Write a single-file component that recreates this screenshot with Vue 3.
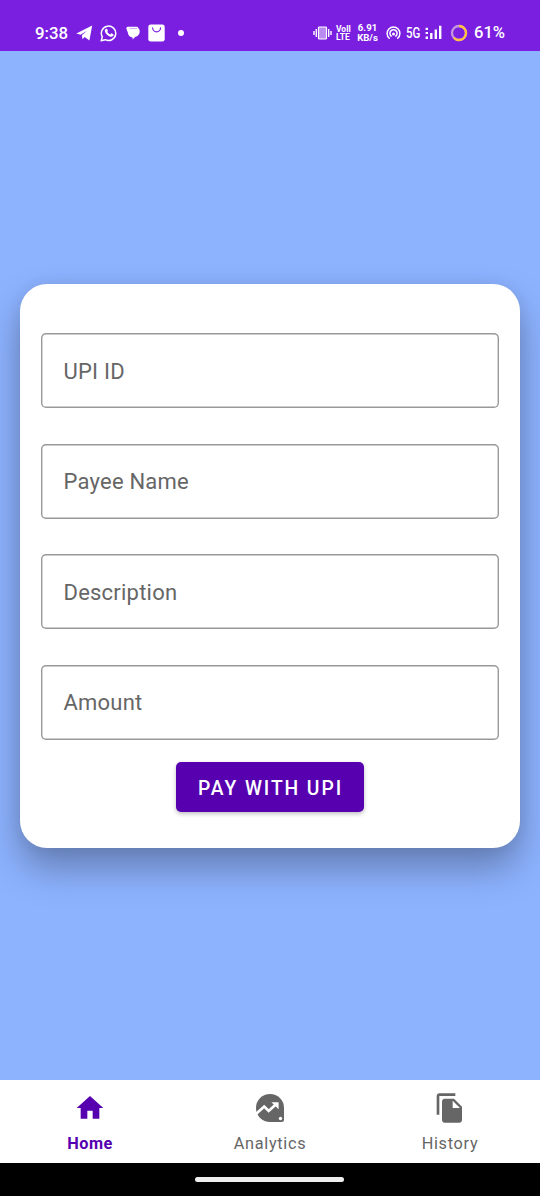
<script setup>
const fields = ['UPI ID', 'Payee Name', 'Description', 'Amount']
</script>

<template>
  <div class="screen">
    <header class="status">
      <span class="clock">9:38</span>
      <svg class="telegram" width="17" height="16" viewBox="0 0 17 16"><path fill="#fff" d="M.3 8.4 16.2.6 13.4 15.4 8.7 12 6.5 14.2 5.9 10.2 11 5.8 4.6 9.7Z" /></svg>
      <svg class="whatsapp" width="18" height="18" viewBox="0 0 18 18">
        <path d="M1.2 16.8 2.3 12.9A7.2 7.2 0 1 1 5.2 15.7Z" fill="none" stroke="#fff" stroke-width="1.5" stroke-linejoin="round" />
        <path d="M6.1 4.8c.6-.3 1-.1 1.2.4l.6 1.4c.1.4-.4.9-.6 1.2.7 1.3 1.6 2.1 2.9 2.6l.9-1c.3-.2.5-.1.8 0l1.4.8c.4.2.3 1 0 1.5-.8 1.2-2.3 1.2-3.6.7-2.4-.9-4.4-3.1-4.9-5.1-.2-1 .4-2.1 1.3-2.5Z" fill="#fff" />
      </svg>
      <svg class="chat" width="14" height="14" viewBox="0 0 14 14"><path fill="#fff" d="M2.3.7h8.2c1.1 0 1.7.6 1.8 1.5 1 .7 1.4 1.8 1.4 3.2 0 2.8-1.9 4.9-4.3 5.3L6.6 13.5V11.4C3.9 11.3 2.2 9.6 1.9 6.8L.5 3.1C-.1 1.8.8.7 2.3.7Z" /><path d="M3.4 2.4H11" stroke="#b686ed" stroke-width=".7" /></svg>
      <svg class="bag" width="17" height="18" viewBox="0 0 17 18"><rect x=".3" y=".4" width="16.4" height="17.2" rx="2.4" fill="#fff" /><path d="M4.6 3.8a4 4 0 0 0 8 0" fill="none" stroke="#7c20df" stroke-width="1.2" stroke-linecap="round" /></svg>
      <i class="dot"></i>
      <svg class="vibrate" width="19" height="14" viewBox="0 0 19 14">
        <rect x="5.5" y="1" width="8" height="12" rx=".8" fill="#b98af0" stroke="#fff" stroke-width="1.2" />
        <path d="M3.3 3v8M15.7 3v8M1 5v4M18 5v4" stroke="#fff" stroke-width="1.4" />
      </svg>
      <span class="stack volte"><span>Voll</span><span>LTE</span></span>
      <span class="stack speed"><span>6.91</span><span>KB/s</span></span>
      <svg class="hotspot" width="15" height="14" viewBox="0 0 15 14">
        <g fill="none" stroke="#fff" stroke-width="1.5" stroke-linecap="round"><path d="M3.3 12.2a6.4 6.4 0 1 1 8.4 0" /><path d="M5.2 10.1a3.6 3.6 0 1 1 4.6 0" /></g><circle cx="7.5" cy="8" r="1.5" fill="#fff" />
      </svg>
      <span class="network"><span>5G</span></span>
      <svg class="signal" width="17" height="15" viewBox="0 0 17 15"><path d="M1.8 11.5V14M6.3 8v6M10.8 4.5V14M15.2.7V14" stroke="#fff" stroke-width="2.4" /><path d="M1.8 2.7v2.2M1.8 6.9V9.1" stroke="#fff" stroke-width="2.4" /></svg>
      <svg class="ring" width="18" height="18" viewBox="0 0 18 18"><g fill="none" stroke-width="2.3"><circle cx="9" cy="9" r="7" stroke="#c795df" /><path d="M9 2a7 7 0 1 1-5.2 11.7" stroke="#ffc044" /></g></svg>
      <span class="battery">61%</span>
    </header>

    <main>
      <form class="card" @submit.prevent>
        <div v-for="field in fields" :key="field" class="field">{{ field }}</div>
        <button type="button">PAY WITH UPI</button>
      </form>
    </main>

    <nav>
      <a class="active">
        <svg width="32" height="32" viewBox="0 0 24 24"><path fill="currentColor" d="M10 20v-6h4v6h5v-8h3L12 3 2 12h3v8z" /></svg>
        <span>Home</span>
      </a>
      <a>
        <svg width="32" height="32" viewBox="0 0 32 32">
          <path fill="currentColor" d="M16 2a14 14 0 0 1 14 14v11.5q0 2.5-2.5 2.5H16A14 14 0 0 1 16 2Z" />
          <path d="M2.5 21.5 10.2 14.5 14.7 19 22.3 12.1" fill="none" stroke="#fff" stroke-width="2.7" />
          <path d="M17.4 10.2H24.6V17.3Z" fill="#fff" /><circle cx="26.5" cy="26.5" r="1.7" fill="#fff" />
        </svg>
        <span>Analytics</span>
      </a>
      <a>
        <svg width="32" height="32" viewBox="0 0 24 24"><path fill="currentColor" d="M16 1H4c-1.1 0-2 .9-2 2v14h2V3h12V1zm-1 4 6 6v10c0 1.1-.9 2-2 2H7.99C6.89 23 6 22.1 6 21l.01-14c0-1.1.89-2 1.99-2h7zm-1 7h5.5L14 6.5V12z" /></svg>
        <span>History</span>
      </a>
    </nav>
    <footer><i></i></footer>
  </div>
</template>

<style>
body { margin: 0; }
</style>

<style scoped>
.screen { display: flex; flex-direction: column; width: 540px; height: 1196px; overflow: hidden; background: #8db3ff; font-family: Roboto, sans-serif; }
.status { box-sizing: border-box; display: flex; align-items: center; flex: none; height: 51.4px; padding: 14px 0 0 35px; background: #7a1ee0; color: #fff; }
.status > * { flex: none; }
.clock { width: 34px; font-size: 16.8px; font-weight: 500; line-height: 20px; white-space: nowrap; }
.telegram { margin-left: 6.5px; }
.whatsapp { margin-left: 7px; }
.chat { margin-left: 8px; }
.bag { margin-left: 8.5px; }
.dot { width: 6px; height: 6px; margin-left: 13px; border-radius: 50%; background: #fff; }
.vibrate { margin-left: 128.5px; }
.stack { display: flex; flex-direction: column; font-weight: 700; white-space: nowrap; }
.volte { width: 15px; margin-left: 4.5px; font-size: 8.5px; line-height: 8px; }
.speed { align-items: center; width: 22px; margin-left: 5.5px; font-size: 9.6px; line-height: 10px; }
.hotspot { margin-left: 7px; }
.network { width: 15px; margin-left: 5px; font-size: 14px; font-weight: 500; }
.network span { display: inline-block; transform: scaleX(.82); transform-origin: left; }
.signal { margin-left: 4px; }
.ring { margin-left: 8.5px; }
.battery { margin-left: 6px; font-size: 16.6px; font-weight: 500; line-height: 20px; }
main { flex: 1; display: flex; justify-content: center; padding-top: 233px; }
.card { box-sizing: border-box; display: flex; flex-direction: column; align-items: center; width: 499.4px; height: 563.2px; margin-right: .4px; padding: 49px 21px 0; border-radius: 27px; background: #fff; box-shadow: 0 20px 36px rgba(40, 45, 65, .4), 0 0 14px rgba(40, 45, 65, .08); }
.field { box-sizing: border-box; display: flex; align-items: center; flex: none; align-self: stretch; height: 75px; margin-bottom: 35.5px; padding-left: 22.4px; border-radius: 5px; box-shadow: inset 0 0 0 1.4px #999; color: #666; font-size: 22px; letter-spacing: .22px; }
.field:nth-child(odd) { padding-top: 1.6px; }
.field:nth-last-child(2) { margin-bottom: 22px; }
button { flex: none; width: 187.5px; height: 50px; padding: 3px 0 0 1.5px; border: 0; border-radius: 5px; background: #5600b0; box-shadow: 0 2px 4px rgba(0, 0, 0, .25); color: #fff; font: 500 19.3px/47px Roboto, sans-serif; letter-spacing: 1.92px; white-space: nowrap; }
nav { display: grid; grid-template-columns: repeat(3, 1fr); flex: none; height: 82.8px; background: #fff; }
nav a { display: flex; flex-direction: column; align-items: center; padding-top: 11.4px; color: #666; }
nav svg { display: block; }
nav span { margin-top: 10.2px; font-size: 16.3px; line-height: 20px; letter-spacing: .7px; }
nav .active { color: #5600b0; }
.active span { font-weight: 700; letter-spacing: .5px; }
footer { display: flex; align-items: center; justify-content: center; flex: none; height: 33px; background: #000; }
footer i { width: 149px; height: 5px; margin-right: 1px; border-radius: 3px; background: #eee; }
</style>
